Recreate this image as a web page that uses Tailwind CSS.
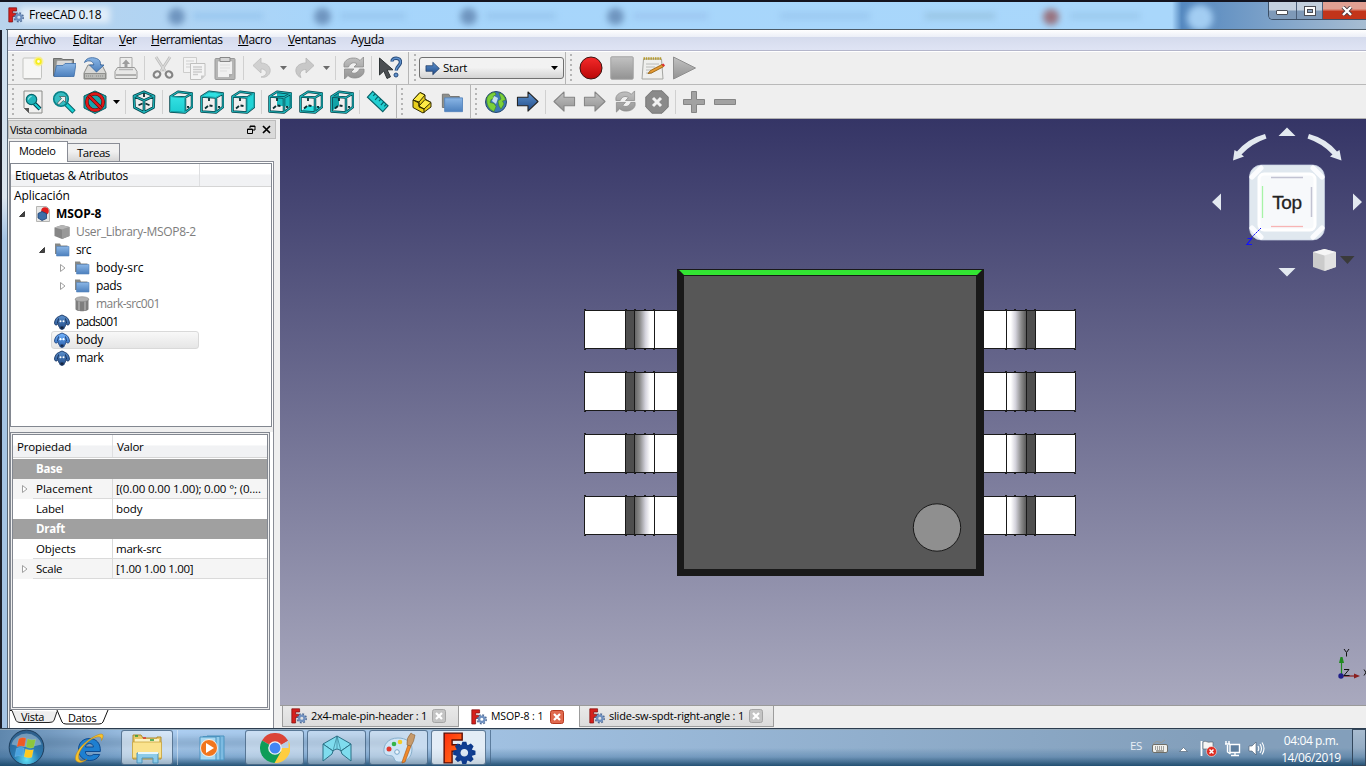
<!DOCTYPE html>
<html lang="es">
<head>
<meta charset="utf-8">
<title>FreeCAD 0.18</title>
<script src="https://cdn.jsdelivr.net/npm/@tailwindcss/browser@4"></script>
</head>
<body class="w-[1366px] h-[766px] overflow-hidden bg-[#efefef] font-['Open_Sans','Noto_Sans',sans-serif] text-[12px] tracking-[-0.4px] text-black">
<svg width="0" height="0" class="absolute">
  <defs>
    <linearGradient id="gBlue" x1="0" y1="0" x2="0" y2="1"><stop offset="0" stop-color="#8ab6e6"/><stop offset="1" stop-color="#4d80bd"/></linearGradient>
    <linearGradient id="gNavy" x1="0" y1="0" x2="0" y2="1"><stop offset="0" stop-color="#5e93cf"/><stop offset="1" stop-color="#204a87"/></linearGradient>
    <linearGradient id="gGray" x1="0" y1="0" x2="0" y2="1"><stop offset="0" stop-color="#c2c2c2"/><stop offset="1" stop-color="#929292"/></linearGradient>
    <linearGradient id="gRed" x1="0" y1="0" x2="0" y2="1"><stop offset="0" stop-color="#f52a2a"/><stop offset="1" stop-color="#b90606"/></linearGradient>
    <linearGradient id="gTeal" x1="0" y1="0" x2="0" y2="1"><stop offset="0" stop-color="#34e0e2"/><stop offset="1" stop-color="#1ccdd1"/></linearGradient>
    <linearGradient id="gF" x1="0" y1="0" x2="1" y2="1"><stop offset="0" stop-color="#ff2d0c"/><stop offset="1" stop-color="#ff7a1c"/></linearGradient>
    <linearGradient id="gView" x1="0" y1="0" x2="0" y2="1"><stop offset="0" stop-color="#353566"/><stop offset="1" stop-color="#a9a9be"/></linearGradient>
    <linearGradient id="gPinL"><stop offset="0" stop-color="#666"/><stop offset=".25" stop-color="#8b8b8b"/><stop offset=".55" stop-color="#d4d3dc"/><stop offset=".8" stop-color="#fff"/></linearGradient>
    <linearGradient id="gPinR"><stop offset=".2" stop-color="#fff"/><stop offset=".45" stop-color="#d4d3dc"/><stop offset=".75" stop-color="#8b8b8b"/><stop offset="1" stop-color="#5a5a5a"/></linearGradient>
    <radialGradient id="gOrb" cx=".5" cy=".85" r=".8"><stop offset="0" stop-color="#5fe0f4"/><stop offset=".45" stop-color="#2a7cb4"/><stop offset="1" stop-color="#2e5f8c"/></radialGradient>

    <symbol id="new" viewBox="0 0 24 24"><rect x="2" y="2" width="18.500" height="20.500" rx="1" fill="#f6f6f5" stroke="#c3c4c1"/><path d="M3 23h17" stroke="#b5b5b2"/><circle cx="17.500" cy="5.500" r="5" fill="#fbf08a" opacity=".8"/><circle cx="17.500" cy="5.500" r="3.200" fill="#f5ee1c"/><circle cx="17.500" cy="5.500" r="1.400" fill="#fffde0"/></symbol>
    <symbol id="open" viewBox="0 0 24 24"><path d="M1.500 20V2.500h8l1.500 1h10.500V10L19 20z" fill="#8f918e" stroke="#6f706e"/><path d="M5 4.500h15v6H4z" fill="#d9d9d8" stroke="#999" stroke-width=".6"/><path d="M4.500 9.500H11L13 7.500h11L22 20.500H2z" fill="url(#gBlue)" stroke="#3e6ea9" stroke-width=".8"/></symbol>
    <symbol id="save" viewBox="0 0 24 24"><path d="M5 9h14l4 8v6H1v-6z" fill="#d9d9d7" stroke="#8a8b88"/><path d="M1.500 17.500h21v5h-21z" fill="#b9bab7" stroke="#80817e" stroke-width=".8"/><path d="M13 20h7M3 20h7" stroke="#8c8d8a" stroke-dasharray="1 1"/><path d="M1.500 6.500C3 1 11 .5 15.500 3.500c2 1.500 2 3.500 2 5.500H21l-7.500 7L6.500 9h4.300C10.500 4.800 5 3.500 1.500 6.500z" fill="url(#gBlue)" stroke="#31619b" stroke-width=".8"/></symbol>
    <symbol id="print" viewBox="0 0 24 24"><path d="M6 1.500h12V14H6z" fill="#ededec" stroke="#aaa"/><path d="M12 3.500 8 8h2.500v4h3V8H16z" fill="#9d9d9d"/><path d="M3.500 11.500h17l2.500 4v7H1v-7z" fill="#e8e8e7" stroke="#9a9a99"/><path d="M5 13.500h14" stroke="#b5b5b4" stroke-width="1.500"/><path d="M2 19h20" stroke="#b0b0af" stroke-width="2"/></symbol>
    <symbol id="cut" viewBox="0 0 24 24"><path d="m5 1 9 14M19 1l-9 14" stroke="#bdbdbc" stroke-width="2.800"/><path d="m5 1 9 14M19 1l-9 14" stroke="#ddd" stroke-width="1.200"/><ellipse cx="6" cy="18.500" rx="3.500" ry="3" fill="none" stroke="#858585" stroke-width="2.200" transform="rotate(-38 6 18.500)"/><ellipse cx="18" cy="18.500" rx="3.500" ry="3" fill="none" stroke="#858585" stroke-width="2.200" transform="rotate(38 18 18.500)"/></symbol>
    <symbol id="copy" viewBox="0 0 24 24"><path d="M1.500 1.500h13v15h-13z" fill="#f3f3f3" stroke="#cdcdcc"/><path d="M4 5h8M4 8h8M4 11h5" stroke="#cfcfcf"/><path d="M8.500 7.500h14.500v12l-4 4H8.500z" fill="#f4f4f4" stroke="#c0c0bf"/><path d="M11 11h9M11 13.500h9M11 16h9M11 18.500h5" stroke="#cbcbcb" stroke-width="1.400"/><path d="M23 19.500h-4v4z" fill="#c9c9c9"/></symbol>
    <symbol id="paste" viewBox="0 0 24 24"><rect x="2" y="2.500" width="20" height="21" rx="1" fill="#b5b5b4" stroke="#999"/><path d="M4.500 5h15v13l-3.500 3.500H4.500z" fill="#f0f0f0" stroke="#aaa" stroke-width=".7"/><path d="M7 1.500h10v4H7z" fill="#d5d5d5" stroke="#888"/><path d="M7 9h10M7 12h10M7 15h7" stroke="#ddd"/><path d="M20 18h-4v4z" fill="#aaa"/></symbol>
    <symbol id="undo" viewBox="0 0 24 24"><path d="M3 9.500 11 2v5c7 0 10 5 9 9s-5 6-9 5c4-1 6-3 5-5.500-1-2-3-2.500-5-2.500V17z" fill="#d0d0d0" stroke="#bdbdbd" stroke-width=".8"/></symbol>
    <symbol id="redo" viewBox="0 0 24 24"><path d="M21 9.500 13 2v5C6 7 2 11 3 16c.7 3 3 5 5 5.500-1-2-1.500-4 0-6 1.500-1.500 3-2 5-2V17z" fill="#c8c8c8" stroke="#b5b5b5" stroke-width=".8"/></symbol>
    <symbol id="refresh" viewBox="0 0 24 24"><path d="M2 11V8c1-4 5-6 9.500-6 3 0 5 1 6.500 2.500L21.500 1v10H12l3-3c-3-2.500-7-1-8.500 3zM22 13v3c-1 4-5 6-9.500 6-3 0-5-1-6.500-2.500L2.500 23V13H12l-3 3c3 2.500 7 1 8.500-3z" fill="url(#gGray)" stroke="#8b8b8b" stroke-width=".8"/></symbol>
    <symbol id="help" viewBox="0 0 24 24"><path d="M1.500 2v17l4.300-4 3.200 7.500 3.500-1.700-3.400-7H15z" fill="#4b4e52" stroke="#2e3436"/><path d="M14 5.500C14 1 22.500 1 22.500 6c0 4-4 4-4.300 8.500" fill="none" stroke="#274b7b" stroke-width="3.400"/><path d="M14 5.500C14 1 22.500 1 22.500 6c0 4-4 4-4.300 8.500" fill="none" stroke="#5f91cc" stroke-width="1.400"/><circle cx="18" cy="19" r="2" fill="#5f91cc" stroke="#274b7b"/></symbol>
    <symbol id="arrR" viewBox="0 0 24 24"><path d="M1.500 7.500h11V2L23 12 12.500 22v-5.500h-11z" stroke-width="1.100" stroke-linejoin="round"/></symbol>
    <symbol id="record" viewBox="0 0 24 24"><circle cx="12" cy="12" r="11" fill="url(#gRed)" stroke="#3a1512"/></symbol>
    <symbol id="stopm" viewBox="0 0 24 24"><rect x=".8" y=".8" width="22.400" height="22.400" rx="1" fill="url(#gGray)" stroke="#a3a3a3"/></symbol>
    <symbol id="notes" viewBox="0 0 24 24"><path d="M2.500 3h18l1.500 20h-21z" fill="#efefed" stroke="#a5a6a2"/><path d="M2.500 2.500h18.500" stroke="#b59a2d" stroke-width="2.600" stroke-dasharray="1.500 .8"/><path d="M5 8h13M5 11h9M5 14h5M5 17h6" stroke="#b9bab7"/><path d="M7 17.500 9.500 14.500 21 8.500l1.500 2.200L10.500 17z" fill="#e59a35" stroke="#8f5902" stroke-width=".8"/><path d="m20.500 8.600 2.200 2.200 1.300-1.300-1.500-2z" fill="#d33"/></symbol>
    <symbol id="play" viewBox="0 0 24 24"><path d="M1.500 1 23.500 12 1.500 23z" fill="url(#gGray)" stroke="#8f8f8f"/></symbol>

    <symbol id="fitall" viewBox="0 0 24 24"><path d="M3 1h18v22H8l-5-5z" fill="#f0f0ef" stroke="#8a8b88"/><path d="M3 18h5v5z" fill="#555"/><path d="m13 13 6 6" stroke="#034" stroke-width="4"/><path d="m13 13 6 6" stroke="#16d0d2" stroke-width="2.200"/><circle cx="10.500" cy="9.500" r="5.200" fill="#20b5bb" stroke="#07656b" stroke-width="1.200"/><path d="M7.500 9.500a3 3 0 0 1 3-3" stroke="#b8f2f3" fill="none"/></symbol>
    <symbol id="fitsel" viewBox="0 0 24 24"><path d="m14 14 8 8" stroke="#045a60" stroke-width="4.600"/><path d="m14 14 7.500 7.500" stroke="#16d0d2" stroke-width="2.800"/><circle cx="9" cy="9" r="7.300" fill="#35bcc1" stroke="#078087" stroke-width="1.600"/><path d="M5 13.500 9.500 8.500 7.500 6.500h6v6l-2-2L7 14.500z" fill="#eee" stroke="#355" stroke-width=".7"/></symbol>
    <symbol id="nodraw" viewBox="0 0 24 24"><path d="m12 1 11 5v12l-11 5.500L1 18V6z" fill="#18a6ab" stroke="#0a5a60"/><circle cx="12" cy="12" r="8.200" fill="none" stroke="#5a0a0a" stroke-width="3.600"/><circle cx="12" cy="12" r="8.200" fill="none" stroke="#e01818" stroke-width="2.400"/><path d="m6 6 12 12" stroke="#5a0a0a" stroke-width="3.600"/><path d="m6 6 12 12" stroke="#e01818" stroke-width="2.400"/></symbol>
    <symbol id="iso" viewBox="0 0 24 24"><g fill="none" stroke-linejoin="round"><path d="m12 1.800 10 4.200-.5 11.500L12 22.500l-9.500-5L2 6zM2 6l10 4.500L22 6M12 10.500v12" stroke="#05434a" stroke-width="2.700"/><path d="M12 3v4M10.500 13.500l-4 1.800M13.500 13.500l4 1.800" stroke="#0b2e31" stroke-width="1.800"/><path d="m12 1.800 10 4.200-.5 11.500L12 22.500l-9.500-5L2 6zM2 6l10 4.500L22 6M12 10.500v12" stroke="#1eb5ba" stroke-width="1.200"/></g></symbol>
    <symbol id="wire" viewBox="0 0 24 24"><g fill="none" stroke-linejoin="round"><path d="M9 8v3M8 16l-3 2.500M12.500 16l-3-.5M20 17l-2-.2" stroke="#0b2e31" stroke-width="1.800"/><path d="M1.500 6.500 16 7.500v15l-14.500-1zM1.500 6.500 9 1.800l14 1.700-7 4M23 3.500V17l-7 5.500" stroke="#05434a" stroke-width="2.500"/><path d="M1.500 6.500 16 7.500v15l-14.500-1zM1.500 6.500 9 1.800l14 1.700-7 4M23 3.500V17l-7 5.500" stroke="#1eb5ba" stroke-width="1.100"/></g></symbol>
    <symbol id="front" viewBox="0 0 24 24"><use href="#wire"/><path d="M2 7 15.500 8v13.900L2 21z" fill="url(#gTeal)"/></symbol>
    <symbol id="top" viewBox="0 0 24 24"><use href="#wire"/><path d="M2.500 6.200 9.200 2.200l12.800 1.500L16 7z" fill="#2de0e2"/></symbol>
    <symbol id="right" viewBox="0 0 24 24"><use href="#wire"/><path d="m16.400 7.800 6.200-3.600v12.600l-6.200 5z" fill="#22d3d6"/></symbol>
    <symbol id="rear" viewBox="0 0 24 24"><path d="M9 2l14 2v13L9 15.500z" fill="#18bcc0"/><use href="#wire"/></symbol>
    <symbol id="bottom" viewBox="0 0 24 24"><path d="M9 15.500 23 17l-7 5.500-14.500-1z" fill="#2de0e2"/><use href="#wire"/></symbol>
    <symbol id="left" viewBox="0 0 24 24"><path d="M1.500 6.500 9 1.800v13.700l-7.500 6z" fill="#12a3a8"/><use href="#wire"/></symbol>
    <symbol id="ruler" viewBox="0 0 24 24"><path d="m7 1.500 16 15-5.500 6-16-15z" fill="#22cfd2" stroke="#056067" stroke-width="1.200"/><path d="m9.500 4-2 2.200M12.500 6.800l-3 3.400M15.500 9.500l-2 2.200M18.500 12.300l-3 3.400M21 15l-2 2.200" stroke="#056067" stroke-width="1.200"/></symbol>
    <symbol id="part" viewBox="0 0 24 24"><g stroke="#302b00" stroke-linejoin="round"><path d="m3 10 7-7.500 5 2.500v4l6 3.500v4.500l-8 6-10-5.500z" fill="#e9cf1c"/><path d="m3 10 7-7.500 5 2.500-6 7zM9 16l6-6.500 6 3-7 6.500z" fill="#fdeb45"/><path d="m3 10 6 3v4l5 2v4M9 12v4" fill="none"/></g></symbol>
    <symbol id="folder" viewBox="0 0 24 24"><path d="M1.500 18V3.500h7L10 6h10v12z" fill="#8d8f8c" stroke="#70716f"/><path d="M4 7.500h19.500v15H4z" fill="url(#gBlue)" stroke="#5685bd"/></symbol>
    <symbol id="globe" viewBox="0 0 24 24"><circle cx="12" cy="12" r="10.500" fill="#3c78b4" stroke="#24486f"/><path d="M3 8c2-4 5-5.500 8-5.500l1 2-3 2 1 2-3 1-1 3 4 1 2 3-2 5c-5-2-8-7-7-13.500zM15 3c4 1 6 4 6.500 7l-3 1 1.500 3-3 5-2-3-1-5 3-2z" fill="#7bd03a" stroke="#3d7a10" stroke-width=".5"/><path d="m10 6 4 2-2 6-4-3z" fill="#d4e8fa" opacity=".9"/></symbol>
    <symbol id="xoct" viewBox="0 0 24 24"><path d="M7 .8h10L23.200 7v10L17 23.200H7L.8 17V7z" fill="#8a8a8a" stroke="#777"/><path d="m8 8 8 8m0-8-8 8" stroke="#f1f1f1" stroke-width="3"/></symbol>
    <symbol id="plus" viewBox="0 0 24 24"><path d="M9.500 1.500h5v8h8v5h-8v8h-5v-8h-8v-5h8z" fill="#a2a2a2" stroke="#858585"/></symbol>
    <symbol id="minus" viewBox="0 0 24 24"><path d="M1.500 9.500h21v5h-21z" fill="#a2a2a2" stroke="#858585"/></symbol>

    <symbol id="fc" viewBox="0 0 32 32"><path d="M2 2h17v6.500H9.500V13h7v6h-7v11H2z" fill="url(#gF)" stroke="#5a0d05" stroke-width="1.300"/><g transform="translate(21 20.500)"><path id="tooth" d="M-1.900-10.500h3.800l1.100 4h-6z" fill="#0d3a8c"/><g fill="#123f93"><use href="#tooth" transform="rotate(45)"/><use href="#tooth" transform="rotate(90)"/><use href="#tooth" transform="rotate(135)"/><use href="#tooth" transform="rotate(180)"/><use href="#tooth" transform="rotate(225)"/><use href="#tooth" transform="rotate(270)"/><use href="#tooth" transform="rotate(315)"/></g><circle r="5.700" fill="none" stroke="#123f93" stroke-width="4.200"/></g></symbol>
    <symbol id="fcs" viewBox="0 0 16 16"><path d="M.8.800h7.800v3.200H4.600v2.200h3v3.200h-3V15H.8z" fill="#d6201c" stroke="#7a0c0c" stroke-width=".7"/><circle cx="10.800" cy="10.300" r="4.400" fill="none" stroke="#4a6793" stroke-width="1.600" stroke-dasharray="1.800 1.650"/><circle cx="10.800" cy="10.300" r="2.700" fill="none" stroke="#6f90bf" stroke-width="2.300"/></symbol>
    <symbol id="tfold" viewBox="0 0 16 16"><path d="M1 12V1.500h5l1 2h6.500V12z" fill="#858785"/><path d="M2.500 4.500H15V14H2.500z" fill="url(#gBlue)" stroke="#5685bd" stroke-width=".6"/></symbol>
    <symbol id="dog" viewBox="0 0 16 16"><path d="M4.800 2.500Q8-.5 11.200 2.500C13.500 3 15.600 6.500 15.500 9.500 14.800 11.600 13 11.500 11.800 9.500c0 2-.8 3-1.300 4-.5 2.500-4.500 2.500-5 0-.5-1-1.300-2-1.300-4C3 11.500 1.200 11.600.5 9.500.4 6.500 2.500 3 4.800 2.500z" fill="url(#gNavy)" stroke="#1b3865" stroke-width=".9"/><path d="M4.500 4.500 3.500 9M11.500 4.500l1 4.500" stroke="#16305a"/><circle cx="6.500" cy="7.200" r="1" fill="#fff"/><circle cx="9.500" cy="7.200" r="1" fill="#fff"/><path d="M6.500 12.500h3v2.200h-3z" fill="#14233c"/></symbol>
    <symbol id="xbtn" viewBox="0 0 14 14"><rect x=".5" y=".5" width="13" height="13" rx="2" stroke-width="1"/><path d="m4 4 6 6m0-6-6 6" stroke="#fff" stroke-width="2.200"/></symbol>
    <symbol id="closed" viewBox="0 0 8 10"><path d="M1.500 1.500v7L6 5z" fill="#fff" stroke="#a0a0a0"/></symbol>
    <symbol id="opened" viewBox="0 0 8 8"><path d="M6.500 1.500v5h-5z" fill="#444" stroke="#111" stroke-width=".7"/></symbol>
  </defs>
</svg>

<div class="w-full h-full flex flex-col">
  <!-- Title bar -->
  <header class="h-[30px] shrink-0 flex items-start border-t-2 border-[#14141f] relative bg-linear-to-r from-[#b9d3ec] from-0% via-[#a6d5fb] via-25% to-[#a9d7fb] to-80% overflow-hidden">
    <div class="absolute inset-0 flex">
      <div class="w-[1172px]"></div>
      <div class="grow bg-linear-to-r from-[#a9d7fb] from-0% via-[#5488bf] via-5% to-[#a7bdd2]"></div>
    </div>
    <div class="absolute inset-0 blur-[3px]">
      <i class="absolute left-[168px] top-[6px] size-[17px] rounded-full bg-[#6f95bf]"></i>
      <i class="absolute left-[314px] top-[6px] size-[17px] rounded-full bg-[#6f95bf]"></i>
      <i class="absolute left-[460px] top-[6px] size-[17px] rounded-full bg-[#6f95bf]"></i>
      <i class="absolute left-[607px] top-[6px] size-[17px] rounded-full bg-[#6f95bf]"></i>
      <i class="absolute left-[1043px] top-[7px] size-[16px] rounded-full bg-[#98737f]"></i>
      <i class="absolute left-[1187px] top-[3px] size-[26px] rounded-full bg-[#a3cdf2]"></i>
      <i class="absolute left-[193px] top-[11px] w-[70px] h-[6px] bg-[#98c6ee]"></i>
      <i class="absolute left-[340px] top-[11px] w-[66px] h-[6px] bg-[#98c6ee]"></i>
      <i class="absolute left-[486px] top-[11px] w-[70px] h-[6px] bg-[#98c6ee]"></i>
      <i class="absolute left-[633px] top-[11px] w-[75px] h-[6px] bg-[#9cc6f0]"></i>
      <i class="absolute left-[780px] top-[11px] w-[90px] h-[6px] bg-[#9ac8f0]"></i>
      <i class="absolute left-[925px] top-[11px] w-[70px] h-[6px] bg-[#98c4e2]"></i>
      <i class="absolute left-[1070px] top-[11px] w-[70px] h-[6px] bg-[#9ac8ec]"></i>
      <i class="absolute left-[20px] top-[5px] w-[90px] h-[16px] bg-white/60"></i>
    </div>
    <div class="relative flex items-center h-[26px] pl-[8px] gap-[5px] grow">
      <svg class="size-4"><use href="#fcs"/></svg><span class="tracking-[-0.25px]">FreeCAD 0.18</span>
    </div>
    <div class="relative flex h-[18px] w-[98px] border-l border-b border-[#3c4f66] rounded-bl-[5px] overflow-hidden">
      <div class="w-[28px] border-r border-[#4a5e78] bg-linear-to-b from-[#c3d0de] from-45% to-[#7e99b8] to-55% flex items-center justify-center"><i class="mt-1 w-3 h-[5px] bg-white border border-[#4a4d55] rounded-[1px]"></i></div>
      <div class="w-[27px] border-r border-[#4a5e78] bg-linear-to-b from-[#c3d0de] from-45% to-[#7e99b8] to-55% flex items-center justify-center"><i class="w-[12px] h-[10px] border border-[#4a4d55] bg-white flex items-center justify-center"><b class="w-[6px] h-1 border border-[#4a4d55] bg-[#8aa3c0]"></b></i></div>
      <div class="w-[43px] bg-linear-to-b from-[#e0a093] from-40% to-[#c2341a] to-55% flex items-center justify-center pl-1"><svg class="w-3 h-[10px]" viewBox="0 0 12 10"><path d="m2 1 8 8m0-8-8 8" stroke="#4a3a40" stroke-width="4"/><path d="m2 1 8 8m0-8-8 8" stroke="#fff" stroke-width="2.400"/></svg></div>
    </div>
    <i class="absolute left-[6px] right-0 bottom-0 h-px bg-[#4c5b68]"></i>
  </header>

  <div class="flex h-[698px] shrink-0">
    <div class="w-[8px] shrink-0 border-l-2 border-l-[#1c1f2b] border-r border-r-[#596878] bg-linear-to-b from-[#c8dcee] from-0% via-[#dbe5ef] via-24% to-[#a4c3e4] to-30%"></div>
    <div class="grow flex flex-col w-[1358px]">
      <!-- Menu -->
      <nav class="h-[21px] shrink-0 flex items-center border-b border-[#b4b6cb] [background-image:linear-gradient(#fff,#eceff7_35%,#d5dbed_36%,#dfe4f4)]">
        <span class="w-[65px] pl-[8px] tracking-[-0.3px]"><u>A</u>rchivo</span><span class="w-[46px]"><u>E</u>ditar</span><span class="w-[32px]"><u>V</u>er</span><span class="w-[87px] tracking-[-0.45px]"><u>H</u>erramientas</span><span class="w-[50px]"><u>M</u>acro</span><span class="w-[63px] tracking-[-0.55px]"><u>V</u>entanas</span><span>Ay<u>u</u>da</span>
      </nav>
      <!-- Toolbar, first row -->
      <div class="h-[34px] shrink-0 flex items-center border-b border-[#b9b9b9] border-t border-t-white bg-[#efefef]">
        <i class="w-[9px] h-7 flex justify-center"><b class="w-[2px] h-full bg-[repeating-linear-gradient(#b5b5b5_0_2px,transparent_2px_5px)]"></b></i>
        <i class="w-[31px] flex justify-center"><svg class="size-6"><use href="#new"/></svg></i>
        <i class="w-[31px] flex justify-center"><svg class="size-6"><use href="#open"/></svg></i>
        <i class="w-[31px] flex justify-center"><svg class="size-6"><use href="#save"/></svg></i>
        <i class="w-[31px] flex justify-center"><svg class="size-6"><use href="#print"/></svg></i>
        <i class="w-[6px] flex justify-center"><b class="w-px h-6 bg-[#d0d0d0]"></b></i>
        <i class="w-[31px] flex justify-center"><svg class="size-6"><use href="#cut"/></svg></i>
        <i class="w-[31px] flex justify-center"><svg class="size-6"><use href="#copy"/></svg></i>
        <i class="w-[31px] flex justify-center"><svg class="size-6"><use href="#paste"/></svg></i>
        <i class="w-[6px] flex justify-center"><b class="w-px h-6 bg-[#d0d0d0]"></b></i>
        <i class="w-[31px] flex justify-center"><svg class="size-6"><use href="#undo"/></svg></i>
        <i class="w-[12px] flex justify-center"><svg class="w-[7px] h-1" viewBox="0 0 7 4"><path d="M0 0h7L3.500 4z" fill="#6b6b6b"/></svg></i>
        <i class="w-[31px] flex justify-center"><svg class="size-6"><use href="#redo"/></svg></i>
        <i class="w-[12px] flex justify-center"><svg class="w-[7px] h-1" viewBox="0 0 7 4"><path d="M0 0h7L3.500 4z" fill="#6b6b6b"/></svg></i>
        <i class="w-[6px] flex justify-center"><b class="w-px h-6 bg-[#d0d0d0]"></b></i>
        <i class="w-[31px] flex justify-center"><svg class="size-6"><use href="#refresh"/></svg></i>
        <i class="w-[5px] flex justify-center"><b class="w-px h-6 bg-[#d0d0d0]"></b></i>
        <i class="w-[34px] flex pl-[4px]"><svg class="size-6"><use href="#help"/></svg></i>
        <i class="w-[2px] h-full border-l border-[#b5b5b5]"></i>
        <i class="w-[9px] h-7 flex justify-center"><b class="w-[2px] h-full bg-[repeating-linear-gradient(#b5b5b5_0_2px,transparent_2px_5px)]"></b></i>
        <div class="w-[145px] h-[22px] flex items-center gap-[3px] pl-[5px] pr-[5px] border border-[#707070] rounded-[3px] bg-linear-to-b from-[#f2f2f2] from-48% to-[#d4d4d4] to-100%">
          <svg class="size-[15px] fill-[url(#gNavy)] stroke-[#17355f]"><use href="#arrR"/></svg><span class="grow text-[11.5px] tracking-[-0.3px]">Start</span><svg class="w-[7px] h-1" viewBox="0 0 7 4"><path d="M0 0h7L3.500 4z"/></svg>
        </div>
        <i class="w-[3px] h-full flex justify-center"><b class="w-px h-full bg-[#b5b5b5]"></b></i>
        <i class="w-[8px] h-7 flex justify-center"><b class="w-[2px] h-full bg-[repeating-linear-gradient(#b5b5b5_0_2px,transparent_2px_5px)]"></b></i>
        <i class="w-[31px] flex justify-center"><svg class="size-6"><use href="#record"/></svg></i>
        <i class="w-[31px] flex justify-center"><svg class="size-6"><use href="#stopm"/></svg></i>
        <i class="w-[31px] flex justify-center"><svg class="size-6"><use href="#notes"/></svg></i>
        <i class="w-[31px] flex justify-center"><svg class="size-6"><use href="#play"/></svg></i>
      </div>
      <!-- Toolbar, second row -->
      <div class="h-[34px] shrink-0 flex items-center border-b border-[#b0b0b0] bg-[#efefef]">
        <i class="w-[9px] h-7 flex justify-center"><b class="w-[2px] h-full bg-[repeating-linear-gradient(#b5b5b5_0_2px,transparent_2px_5px)]"></b></i>
        <i class="w-[31px] flex justify-center"><svg class="size-6"><use href="#fitall"/></svg></i>
        <i class="w-[31px] flex justify-center"><svg class="size-6"><use href="#fitsel"/></svg></i>
        <i class="w-[31px] flex justify-center"><svg class="size-6"><use href="#nodraw"/></svg></i>
        <i class="w-[12px] flex justify-center"><svg class="w-[7px] h-1" viewBox="0 0 7 4"><path d="M0 0h7L3.500 4z"/></svg></i>
        <i class="w-[6px] flex justify-center"><b class="w-px h-6 bg-[#d0d0d0]"></b></i>
        <i class="w-[31px] flex justify-center"><svg class="size-6"><use href="#iso"/></svg></i>
        <i class="w-[6px] flex justify-center"><b class="w-px h-6 bg-[#d0d0d0]"></b></i>
        <i class="w-[31px] flex justify-center"><svg class="size-6"><use href="#front"/></svg></i>
        <i class="w-[31px] flex justify-center"><svg class="size-6"><use href="#top"/></svg></i>
        <i class="w-[31px] flex justify-center"><svg class="size-6"><use href="#right"/></svg></i>
        <i class="w-[6px] flex justify-center"><b class="w-px h-6 bg-[#d0d0d0]"></b></i>
        <i class="w-[31px] flex justify-center"><svg class="size-6"><use href="#rear"/></svg></i>
        <i class="w-[31px] flex justify-center"><svg class="size-6"><use href="#bottom"/></svg></i>
        <i class="w-[31px] flex justify-center"><svg class="size-6"><use href="#left"/></svg></i>
        <i class="w-[5px] flex justify-center"><b class="w-px h-6 bg-[#d0d0d0]"></b></i>
        <i class="w-[34px] flex pl-[4px]"><svg class="size-[23px]"><use href="#ruler"/></svg></i>
        <i class="w-[2px] h-full border-l border-[#b5b5b5]"></i>
        <i class="w-[8px] h-7 flex justify-center"><b class="w-[2px] h-full bg-[repeating-linear-gradient(#b5b5b5_0_2px,transparent_2px_5px)]"></b></i>
        <i class="w-[31px] flex justify-center"><svg class="size-6"><use href="#part"/></svg></i>
        <i class="w-[33px] flex pl-[4px]"><svg class="size-[22px]"><use href="#folder"/></svg></i>
        <i class="w-[2px] h-full border-l border-[#b5b5b5]"></i>
        <i class="w-[8px] h-7 flex justify-center"><b class="w-[2px] h-full bg-[repeating-linear-gradient(#b5b5b5_0_2px,transparent_2px_5px)]"></b></i>
        <i class="w-[31px] flex justify-center"><svg class="size-6"><use href="#globe"/></svg></i>
        <i class="w-[31px] flex justify-center pl-px"><svg class="size-[23px] fill-[url(#gNavy)] stroke-[#222]"><use href="#arrR"/></svg></i>
        <i class="w-[6px] flex justify-center"><b class="w-px h-6 bg-[#d0d0d0]"></b></i>
        <i class="w-[31px] flex justify-center pl-[2px]"><svg class="size-[23px] -scale-x-100 fill-[url(#gGray)] stroke-[#858585]"><use href="#arrR"/></svg></i>
        <i class="w-[31px] flex justify-center"><svg class="size-[23px] fill-[url(#gGray)] stroke-[#858585]"><use href="#arrR"/></svg></i>
        <i class="w-[31px] flex justify-center"><svg class="size-[23px]"><use href="#refresh"/></svg></i>
        <i class="w-[31px] flex justify-center"><svg class="size-6"><use href="#xoct"/></svg></i>
        <i class="w-[6px] flex justify-center"><b class="w-px h-6 bg-[#d0d0d0]"></b></i>
        <i class="w-[31px] flex justify-center"><svg class="size-6"><use href="#plus"/></svg></i>
        <i class="w-[31px] flex justify-center"><svg class="size-6"><use href="#minus"/></svg></i>
      </div>

      <div class="flex grow">
        <!-- Combined view -->
        <aside class="w-[272px] shrink-0 flex flex-col pt-px">
          <div class="h-[19px] w-[268px] shrink-0 flex items-center border border-[#bdbdbd] bg-[#dadada] pl-px pr-[4px] gap-[6px] text-[11px]">
            <span class="grow tracking-[-0.55px] pt-px">Vista combinada</span>
            <svg class="size-[9px]" viewBox="0 0 9 9"><path d="M3 3V1h5v4H6M.5 4h5v4.500h-5zM3 1.500h5M.5 4.500h5" fill="none" stroke="#000"/></svg>
            <svg class="size-[9px]" viewBox="0 0 9 9"><path d="m1 1 7 7m0-7L1 8" stroke="#000" stroke-width="1.700"/></svg>
          </div>
          <div class="h-[22px] shrink-0 flex items-end pl-px text-[11.500px]">
            <div class="relative z-10 w-[59px] h-[21px] -mb-px bg-white border border-b-0 border-[#898c95] flex items-center pl-[9px] pb-px text-[11px] tracking-[-0.4px]">Modelo</div>
            <div class="w-[52px] h-[18px] border border-b-0 border-l-0 border-[#898c95] bg-linear-to-b from-[#f0f0f0] from-45% to-[#d6d6d6] flex items-center pl-[9px] tracking-[-0.5px]">Tareas</div>
          </div>
          <div class="ml-px mr-[6px] grow border border-b-0 border-[#898c95] flex flex-col pt-px bg-white">
            <div class="w-[262px] h-[264px] shrink-0 border border-[#828790] bg-white flex flex-col">
              <div class="h-[23px] shrink-0 flex items-center border-b border-[#d5d5d5] bg-linear-to-b from-white from-45% to-[#f1f2f4] to-50%"><span class="w-[189px] h-full flex items-center pt-px pl-[4px] border-r border-[#dedfe1] tracking-[-0.28px]">Etiquetas &amp; Atributos</span></div>
              <div class="h-[18px] flex items-center pl-[3px] tracking-[-0.1px]">Aplicación</div>
              <div class="h-[18px] flex items-center pl-[7px] font-bold tracking-[-0.05px]"><svg class="size-[8px]"><use href="#opened"/></svg><svg class="ml-[10px] mr-[6px] w-[14px] h-[16px]" viewBox="0 0 14 16"><path d="M.5.500h10l3 3v12H.5z" fill="#e7e7e6" stroke="#b5b5b3"/><circle cx="9" cy="5" r="3.800" fill="#e01b1b"/><path d="m6 5.500 4.500 2v5l-4.500 2-4-2.500V7.500z" fill="#3d6ea8" stroke="#1c3f70" stroke-width=".8"/></svg>MSOP-8</div>
              <div class="h-[18px] flex items-center pl-[43px] text-[#7d7d7d] tracking-[-0.3px]"><svg class="size-4 mr-[6px]" viewBox="0 0 16 16"><path d="M.5 3.500 8 1l7.500 2v9L8 15l-7.500-3z" fill="#868686"/><path d="M8 5.500 15.500 3v9L8 15z" fill="#999"/><path d="M.5 3.500 8 1l7.500 2L8 5.500z" fill="#b5b5b5"/></svg>User_Library-MSOP8-2</div>
              <div class="h-[18px] flex items-center pl-[27px]"><svg class="size-[8px]"><use href="#opened"/></svg><svg class="ml-[8px] mr-[6px] size-4"><use href="#tfold"/></svg>src</div>
              <div class="h-[18px] flex items-center pl-[48px] tracking-[-0.1px]"><svg class="w-2 h-[10px]"><use href="#closed"/></svg><svg class="ml-[7px] mr-[6px] size-4"><use href="#tfold"/></svg>body-src</div>
              <div class="h-[18px] flex items-center pl-[48px]"><svg class="w-2 h-[10px]"><use href="#closed"/></svg><svg class="ml-[7px] mr-[6px] size-4"><use href="#tfold"/></svg>pads</div>
              <div class="h-[18px] flex items-center pl-[63px] text-[#7d7d7d] tracking-[-0.55px]"><svg class="size-4 mr-[6px]" viewBox="0 0 16 16"><path d="M1.500 3.500h13V13c0 3-13 3-13 0z" fill="#7e7e7e"/><path d="M5 5v9.500M11 5v9.500" stroke="#a0a0a0" stroke-width="2"/><ellipse cx="8" cy="3.200" rx="6.800" ry="2.500" fill="#b0b0b0" stroke="#888" stroke-width=".6"/></svg>mark-src001</div>
              <div class="h-[18px] flex items-center pl-[43px] tracking-[-0.75px]"><svg class="size-4 mr-[6px]"><use href="#dog"/></svg>pads001</div>
              <div class="h-[18px] ml-[40px] w-[148px] flex items-center pl-[2px] border border-[#d9d9d9] rounded-[3px] bg-linear-to-b from-[#f8f8f8] to-[#e6e6e6] tracking-[-0.2px]"><svg class="size-4 mr-[6px] brightness-125"><use href="#dog"/></svg>body</div>
              <div class="h-[18px] flex items-center pl-[43px]"><svg class="size-4 mr-[6px]"><use href="#dog"/></svg>mark</div>
            </div>
            <div class="h-[5px] shrink-0 bg-[#efefef]"></div>
            <div class="w-[260px] h-[278px] shrink-0 border border-[#828790] p-px bg-[#efefef]">
              <div class="h-full border border-[#828790] bg-white flex flex-col text-[11.500px] tracking-[-0.25px]">
                <div class="h-[23px] shrink-0 flex border-b border-[#d5d5d5] bg-linear-to-b from-white from-45% to-[#f1f2f4] to-50%"><span class="w-[100px] flex items-center pt-px pl-[4px] border-r border-[#dedfe1] tracking-[-0.15px]">Propiedad</span><span class="flex items-center pt-px pl-[4px]">Valor</span></div>
                <div class="h-[20px] mt-px flex items-center pl-[23px] bg-[#a0a0a0] text-white font-bold">Base</div>
                <div class="h-[20px] flex bg-[#f5f5f5]"><span class="w-[20px] flex items-center pl-[8px]"><svg class="w-2 h-[10px]"><use href="#closed"/></svg></span><span class="w-[80px] flex items-center pl-[3px] border-r border-b border-[#dadada] tracking-normal">Placement</span><span class="grow flex items-center pl-[3px] border-b border-[#dadada] tracking-[-0.14px] whitespace-nowrap">[(0.00 0.00 1.00); 0.00 °; (0....</span></div>
                <div class="h-[20px] flex"><span class="w-[20px]"></span><span class="w-[80px] flex items-center pl-[3px] border-r border-[#dadada]">Label</span><span class="grow flex items-center pl-[3px] tracking-[-0.1px]">body</span></div>
                <div class="h-[20px] flex items-center pl-[23px] bg-[#a0a0a0] text-white font-bold">Draft</div>
                <div class="h-[20px] flex"><span class="w-[20px]"></span><span class="w-[80px] flex items-center pl-[3px] border-r border-b border-[#dadada] tracking-[-0.1px]">Objects</span><span class="grow flex items-center pl-[3px] border-b border-[#dadada]">mark-src</span></div>
                <div class="h-[20px] flex bg-[#f5f5f5]"><span class="w-[20px] flex items-center pl-[8px]"><svg class="w-2 h-[10px]"><use href="#closed"/></svg></span><span class="w-[80px] flex items-center pl-[3px] border-r border-b border-[#dadada]">Scale</span><span class="grow flex items-center pl-[3px] border-b border-[#dadada] tracking-[-0.28px]">[1.00 1.00 1.00]</span></div>
              </div>
            </div>
            <svg class="w-[262px] h-[18px] shrink-0 overflow-visible" viewBox="10 710 262 18" font-size="11" letter-spacing="-.3"><path d="M10 710.500h2l4 10q1 2 4 2h29q4 0 5-2l3-9" fill="#ededed" stroke="#222"/><path d="M57 710l5 12q1 2 4 2h33q3 0 4-2l5-12" fill="#fff" stroke="#111"/><text x="21" y="721">Vista</text><text x="68" y="722">Datos</text></svg>
          </div>
        </aside>

        <main class="grow flex flex-col">
          <!-- 3D view -->
          <svg class="w-[1086px] h-[586px] shrink-0" viewBox="280 119 1086 586">
            <defs>
              <g id="pinL"><path d="M584.500.500h93v38h-93z" fill="#fff" stroke="#1a1a1a"/><path d="M625.500.500h9v38h-9z" fill="#4e4e4e" stroke="#1a1a1a"/><path d="M635 1h19v37h-19z" fill="url(#gPinL)"/><path d="M654.500 0v39" stroke="#1a1a1a"/><path d="M584 -.5h2M625-.5h2M634-.5h2M644-.5h2M653-.5h2M584 39.500h2M625 39.500h2M634 39.500h2M644 39.500h2M653 39.500h2" stroke="#1a1a1a"/></g>
              <g id="pinR"><path d="M982.500.500h93v38h-93z" fill="#fff" stroke="#1a1a1a"/><path d="M1026.500.500h9v38h-9z" fill="#4e4e4e" stroke="#1a1a1a"/><path d="M1007 1h19v37h-19z" fill="url(#gPinR)"/><path d="M1006.500 0v39" stroke="#1a1a1a"/><path d="M1005-.5h2M1014-.5h2M1025-.5h2M1034-.5h2M1074-.5h2M1005 39.500h2M1014 39.500h2M1025 39.500h2M1034 39.500h2M1074 39.500h2" stroke="#1a1a1a"/></g>
            </defs>
            <path d="M280 119h1086v586H280z" fill="url(#gView)"/>
            <use href="#pinL" y="310"/><use href="#pinL" y="372"/><use href="#pinL" y="434"/><use href="#pinL" y="496"/>
            <use href="#pinR" y="310"/><use href="#pinR" y="372"/><use href="#pinR" y="434"/><use href="#pinR" y="496"/>
            <path d="M677 269h307v307H677z" fill="#191919"/>
            <path d="M679 270h303l-5 5H684z" fill="#33e533"/>
            <path d="M684 276h292v293H684z" fill="#575757"/>
            <circle cx="937" cy="527.500" r="23.700" fill="#8f8f8f" stroke="#1a1a1a"/>
            <!-- navigation cube -->
            <g fill="#e3e9f0">
              <path d="M1278.500 136h17l-8.500-8.500zM1278.500 268h17l-8.500 8.500zM1221 193.500v17l-9-8.500zM1353 193.500v17l9-8.500z"/>
              <path d="M1265 134l1.500 4.500q-15 5-25 16l2.500 2-11 4 1.500-10.500 2.500 1.500q11-13 28-17.500zM1309 134l-1.500 4.500q15 5 25 16l-2.500 2 11.500 4-2-10.500-2.500 1.500q-11-13-28-17.500z"/>
            </g>
            <rect x="1249.500" y="165" width="75" height="75" rx="12" fill="#e0e8ef" stroke="#c9d2e4" stroke-opacity=".7"/>
            <path d="M1252 177l9-9M1322 177l-9-9M1252 228l9 9M1322 228l-9 9" stroke="#fbfcfe" stroke-width="5" stroke-linecap="round"/>
            <rect x="1259" y="174" width="56" height="56" rx="5" fill="#f7f9fb" stroke="#fff" stroke-width="3"/>
            <path d="M1271 177.500h32M1311.500 187v30" stroke="#c2c3d2" stroke-width="1.500"/><path d="M1262.500 186v32" stroke="#a7f3a7" stroke-width="1.300"/><path d="M1271 226.500h32" stroke="#f8b4b4" stroke-width="1.300"/>
            <text x="1287" y="208.500" text-anchor="middle" font-family="Liberation Sans" font-size="19" letter-spacing="-.3" fill="#222" stroke="#222" stroke-width=".3">Top</text>
            <path d="m1261 228-10 10" stroke="#1212ff" stroke-dasharray="2 .6"/><path d="M1247.500 238.500h4l-4.500 6h5" fill="none" stroke="#1212ff" stroke-width="1.200"/>
            <path d="m1313 252 11.500-3 11.500 3v15l-11.500 4-11.500-4z" fill="#cbcbcb"/><path d="m1324.500 255 11.500-3v15l-11.500 4z" fill="#e2e2e2"/><path d="m1313 252 11.500-3 11.500 3-11.500 3.500z" fill="#f6f6f6"/>
            <path d="M1340 256h14.500l-7 8z" fill="#3a3a3a"/>
            <!-- axis cross -->
            <path d="M1341.500 676v-15" stroke="#1f8a1f" stroke-width="1.200"/><path d="M1339 663l1.500-6h2l1.500 6z" fill="#1f8a1f"/>
            <path d="M1342 676h14" stroke="#8a1f1f" stroke-width="1.200"/><path d="m1354 673.500 6 2.500-6 2.500z" fill="#8a1f1f"/><circle cx="1341" cy="676" r="2.700" fill="#1f1f8a"/>
            <path d="m1344 649 2.500 3.500 2.500-3.500M1346.500 652.500v4M1344 669.500h5l-5 6h5.500M1364 669.500l4 6M1368 669.500l-4 6" fill="none" stroke="#111" stroke-width="1"/>
          </svg>
          <!-- Document tabs -->
          <div class="h-[23px] border-t border-[#9a9a9a] bg-[#efefef] flex items-start pl-[2px] text-[11px] tracking-[-0.25px] whitespace-nowrap">
            <div class="w-[177px] h-[21px] shrink-0 flex items-center pl-[8px] gap-[4px] border border-t-0 border-[#9c9c9c] bg-linear-to-b from-[#e9e9e9] to-[#dcdcdc]"><svg class="size-4"><use href="#fcs"/></svg><span class="w-[117px]">2x4-male-pin-header : 1</span><svg class="size-[14px] fill-[#c4c4c4] stroke-[#a5a5a5]"><use href="#xbtn"/></svg></div>
            <div class="w-[120px] h-[22px] shrink-0 flex items-center pl-[12px] gap-[4px] bg-white"><svg class="size-4"><use href="#fcs"/></svg><span class="w-[55px] tracking-[-0.1px] text-[10.500px]">MSOP-8 : 1</span><svg class="size-[14px] fill-[#e0694e] stroke-[#b7391e]"><use href="#xbtn"/></svg></div>
            <div class="w-[195px] h-[21px] shrink-0 flex items-center pl-[9px] gap-[4px] border border-t-0 border-[#9c9c9c] bg-linear-to-b from-[#e9e9e9] to-[#dcdcdc]"><svg class="size-4"><use href="#fcs"/></svg><span class="w-[136px] tracking-[-0.2px]">slide-sw-spdt-right-angle : 1</span><svg class="size-[14px] fill-[#c4c4c4] stroke-[#a5a5a5]"><use href="#xbtn"/></svg></div>
          </div>
        </main>
      </div>
    </div>
  </div>

  <!-- Taskbar -->
  <footer class="h-[38px] shrink-0 relative flex items-stretch border-t border-[#2c3d4f] bg-linear-to-r from-[#5f87ad] from-0% via-[#aed0f3] via-12% to-[#839fbb] to-88% overflow-hidden">
    <i class="absolute inset-0 border-t border-white/50 bg-linear-to-b from-transparent from-50% via-[#2c618f]/35 via-75% to-[#174568]/90"></i>
    <i class="absolute left-[40px] top-[10px] w-[360px] h-[8px] bg-[#35577a]/40 blur-[4px]"></i>
    <div class="relative w-[121px] flex items-center">
      <svg class="ml-[8px] size-[37px]" viewBox="0 0 38 38"><circle cx="19" cy="19" r="17.800" fill="url(#gOrb)" stroke="#1c3b58"/><path d="M3.500 16a16 15 0 0 1 31 0q-15 5-31 0z" fill="#c9dbe9" opacity=".45"/><g stroke="#fff" stroke-opacity=".25" stroke-width=".5"><path d="M11 10q4-2.500 7.500-.5L17 18q-4-1.500-8 .5z" fill="#ee5a24"/><path d="M20 10q4 2 8.500.500L26.500 19q-4 1.500-8-.5z" fill="#8cc63e"/><path d="M8.600 20q4-2.200 8-.5L15 28q-4-1.500-8 .5z" fill="#4aa3df"/><path d="M18 20.500q4 2 8.200.5L24.500 29q-4 1.500-8-.5z" fill="#ffc91e"/></g></svg>
      <svg class="ml-[27px] size-[34px]" viewBox="0 0 34 34"><path d="M17.500 7.500c-6.500 0-11 4.500-11 11s4.500 11 11.200 11c5 0 8.500-2.300 10-6h-6.500c-1 1-2 1.300-3.500 1.300-2.800 0-4.200-1.600-4.400-4.300h15c.6-8-4-13-10.800-13zm-4 8.500c.4-2.300 1.800-3.500 4-3.500s3.700 1.200 3.900 3.500z" fill="#1e7fd0" stroke="#0e4a8f"/><path d="M6 31c-6-2-1-13 8-20S30 1.500 31 4c.5 1.500-.5 4-1.500 5.500C30 4.500 25 4.500 17 10S4 26 8 29.500c2 1 5 0 7-1.500-3 3-6.500 4-9 3z" fill="#f8c32c" stroke="#b9800f" stroke-width=".5"/></svg>
    </div>
    <div class="relative w-[52px] my-px border border-[#3f5f80]/80 rounded-[3px] bg-white/50 flex items-center justify-center"><svg class="size-[34px]" viewBox="0 0 34 34"><path d="M3 4h8l2 3h14v-1h4v22H3z" fill="#e9c968" stroke="#ad8a2e"/><path d="M5 8h24v10H5z" fill="#fbf2c4"/><path d="M2.500 11h29v16h-29z" fill="#fae28d" stroke="#c9a53f" stroke-width=".8"/><path d="M5 5h3M20 9h4" stroke="#2a9a3a" stroke-width="1.500"/><path d="M13 7h3" stroke="#d33" stroke-width="1.500"/><path d="M7 32V22h21v10h-5v-5H12v5z" fill="#8ccbe8" stroke="#4d95bd"/><path d="M8 22h20" stroke="#e5f7fd" stroke-width="2"/></svg></div>
    <i class="relative w-[5px] my-px border-r border-white/40"></i>
    <div class="relative w-[67px] flex items-center justify-center pl-px"><svg class="size-[30px]" viewBox="0 0 30 30"><path d="M10 3h17v24H10z" fill="#7dbbe2" stroke="#4b93c0"/><path d="M6 3.500h17v23.500H6z" fill="#91cbea" stroke="#4b93c0"/><path d="M3 4h16v23H3z" fill="#a7d8f1" stroke="#4b93c0"/><circle cx="12" cy="15" r="8.500" fill="#f1761d" stroke="#fff" stroke-width=".8"/><path d="m9 10 8 5-8 5z" fill="#fff"/></svg></div>
    <div class="relative w-[59px] my-px border border-[#3f5f80]/80 rounded-[3px] bg-white/40 flex items-center justify-center"><svg class="size-[30px]" viewBox="0 0 30 30"><path d="M15 15 2 7.500A15 15 0 0 1 28 7.500z" fill="#db4437"/><path d="M15 15H28.500V8A15 15 0 0 1 14 30z" fill="#ffcd40"/><path d="M28 7.500H15V15z" fill="#db4437"/><path d="M2 7.500A15 15 0 0 0 14.500 30L21 18.500 15 15z" fill="#0f9d58"/><circle cx="15" cy="15" r="6.800" fill="#f3f3f3"/><circle cx="15" cy="15" r="5.500" fill="#4285f4"/></svg></div>
    <div class="relative w-[59px] ml-[3px] my-px border border-[#3f5f80]/80 rounded-[3px] bg-white/30 flex items-center justify-center"><svg class="size-[30px]" viewBox="0 0 30 30"><g fill="#7fdcee" stroke="#2b7186" stroke-linejoin="round"><path d="m15 3 14 8-10 7q-4-4-8 0L1 11z"/><path d="M1 11l10 7-1 3-9 7zM29 11l-10 7 1 3 9 7z"/><path d="M15 3v12.500M15 3 11 18M15 3l4 15" fill="none" stroke-width=".6"/></g></svg></div>
    <div class="relative w-[59px] ml-[3px] my-px border border-[#3f5f80]/80 rounded-[3px] bg-white/40 flex items-center justify-center"><svg class="w-[34px] h-[32px]" viewBox="0 0 34 32"><path d="M16 6C6 6 1 13 2 20c1 4 5 3 8 4 3 1 1 5 6 6 8 1 14-5 14-13 0-7-6-11-14-11z" fill="#cfe4f6" stroke="#86aecb"/><circle cx="7" cy="17" r="2.500" fill="#e2382c"/><circle cx="12" cy="12" r="2.300" fill="#35b44a"/><circle cx="18" cy="10" r="2.300" fill="#f2cb2a"/><circle cx="15" cy="20" r="2.300" fill="#eef6fc" stroke="#78a6c9"/><path d="m20 30 6-17 3 1-6 16-3 1z" fill="#f08a2c" stroke="#a65411" stroke-width=".6"/><path d="M25 13q-1-7 4-12 2 2 4 2-1 7-4 11z" fill="#c79a6b" stroke="#8a6137" stroke-width=".6"/></svg></div>
    <div class="relative w-[55px] ml-[3px] my-px border border-[#3f5f80]/80 rounded-[3px] bg-white/70 flex items-center justify-center"><svg class="size-[34px]"><use href="#fc"/></svg></div>
    <i class="relative w-[5px] my-px border-r border-[#3f5f80]/70"></i>
    <div class="relative grow"></div>
    <div class="relative flex items-center text-white h-[36px] w-[222px]">
      <span class="w-[22px] text-[11.500px] text-[#e8eef5] -mt-[3px]">ES</span>
      <svg class="w-[16px] h-[14px] -mt-[3px]" viewBox="0 0 16 14"><path d="M1 5q4-4 6-2t6-2" fill="none" stroke="#9a9a92"/><rect x=".5" y="5.500" width="15" height="8" rx="1.500" fill="#f0f0ec" stroke="#6f6f68"/><path d="M3 8h10M3 10h10" stroke="#55554f" stroke-dasharray="1 1"/><path d="M4 12h8" stroke="#55554f"/></svg>
      <svg class="ml-[11px] mt-[3px] w-[9px] h-[6px]" viewBox="0 0 9 6"><path d="M.5 5.500h8l-4-4z" fill="#fff" stroke="#55677a" stroke-width=".7"/></svg>
      <svg class="ml-[12px] mt-[2px] size-[17px]" viewBox="0 0 17 17"><path d="M1.500 1v15" stroke="#fff" stroke-width="1.800"/><path d="M3 2c3-2 4 1 7 0h3v7H3z" fill="#f5f5f5" stroke="#4f5a66" stroke-width=".6"/><circle cx="11.500" cy="11.500" r="5" fill="#de2c22" stroke="#fff" stroke-width=".5"/><path d="m9.500 9.500 4 4m0-4-4 4" stroke="#fff" stroke-width="1.500"/></svg>
      <svg class="ml-[7px] mt-[2px] size-[17px]" viewBox="0 0 17 17"><path d="M6 4.500h9.500v8H6z" fill="#5f7f9f" stroke="#fff" stroke-width="1.400"/><path d="M7 15.500h8M11 13v2M1 4h5M2 1v3M5 1v3M3.500 5v7l3 2" stroke="#fff" stroke-width="1.400" fill="none"/></svg>
      <svg class="ml-[7px] mt-[2px] size-[17px]" viewBox="0 0 17 17"><path d="M1 6h3l4-4v13l-4-4H1z" fill="#fff" stroke="#46586c" stroke-width=".6"/><path d="M10 6q1.500 2.500 0 5M12 4q3 4.500 0 9M14 2.500q4 6 0 12" fill="none" stroke="#fff" stroke-width="1.100"/></svg>
      <div class="ml-[14px] w-[64px] text-center leading-[17px] tracking-[-0.4px] mt-[3px] whitespace-nowrap">04:04 p.m.<br>14/06/2019</div>
    </div>
    <div class="relative w-[14px] border border-[#33475c] bg-linear-to-b from-white/30 to-transparent"></div>
  </footer>
</div>
</body>
</html>
